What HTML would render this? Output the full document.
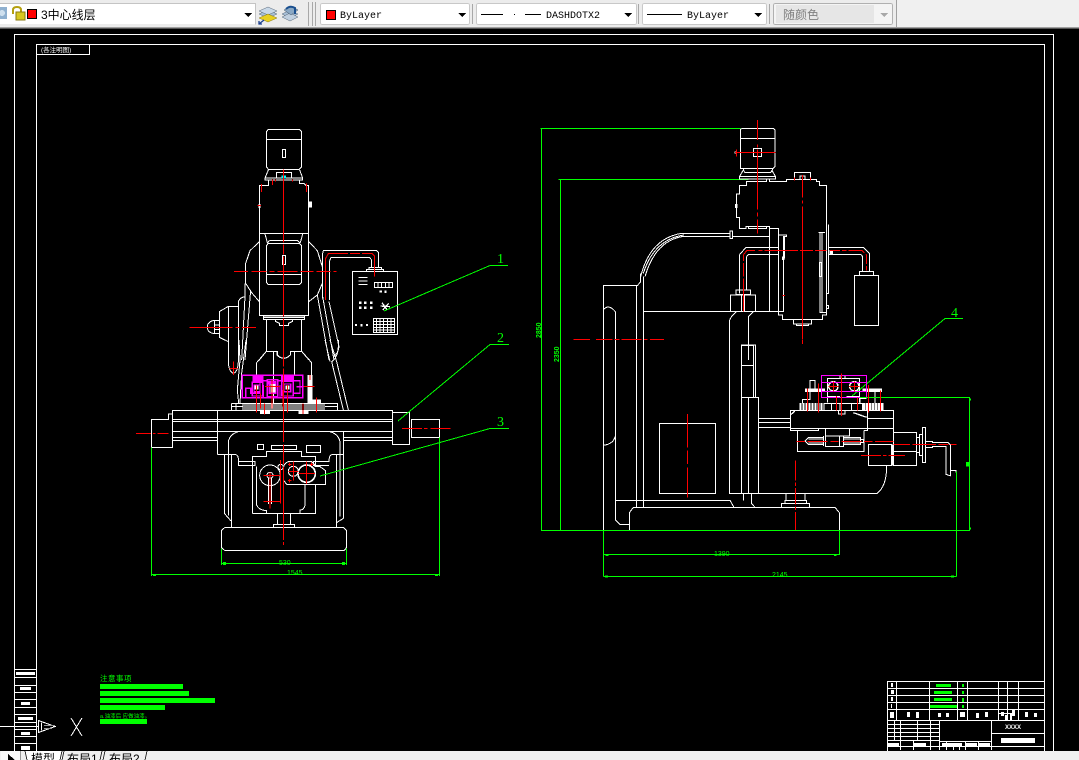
<!DOCTYPE html>
<html><head><meta charset="utf-8"><style>
html,body{margin:0;padding:0;width:1079px;height:760px;overflow:hidden;background:#000}
svg{display:block;position:absolute;left:0;top:0}
.w{fill:none;stroke:#fff;stroke-width:3}
.r{fill:none;stroke:#f00;stroke-width:3}
.g{fill:none;stroke:#0f0;stroke-width:3}
.m{fill:none;stroke:#f0f;stroke-width:3}
.ui{font-family:"Liberation Mono",monospace;font-size:10px;fill:#000}
</style></head><body>
<svg width="1079" height="760" viewBox="0 0 1079 760" xmlns="http://www.w3.org/2000/svg" shape-rendering="crispEdges">
<rect width="1079" height="760" fill="#000"/>

<!-- Frames -->
<g fill="none" stroke="#fff" stroke-width="1">
<path d="M14.5,751V34.5H1053.5V751"/>
<path d="M36.5,751V44.5H1044.5V751"/>
<path d="M36.5,54.5H89.5V44.5"/>
<path d="M14.5,669.5H36.5M14.5,677.5H36.5M14.5,685.5H36.5M14.5,692.5H36.5M14.5,699.5H36.5M14.5,707.5H36.5M14.5,714.5H36.5M14.5,722.5H36.5M14.5,729.5H36.5M14.5,736.5H36.5M14.5,743.5H36.5"/>
<path d="M0,726.5H38"/>
<path d="M38.5,720.5L55,726.5L38.5,732.5ZM41.5,722.5V730.5"/>
<path d="M71,718L82,736M82,718L71,736"/>
</g>
<g fill="#999"><rect x="44" y="725" width="11" height="1"/><rect x="44" y="728" width="8" height="1"/></g>
<g fill="#fff">
<rect x="16" y="672" width="19" height="3"/><rect x="20" y="687" width="11" height="3"/><rect x="21" y="702" width="9" height="3"/><rect x="18" y="717" width="15" height="3"/><rect x="21" y="732" width="9" height="3"/><rect x="21" y="746" width="9" height="4"/>
</g>
<text x="41" y="52" font-family="'Liberation Sans','Noto Sans CJK SC',sans-serif" font-size="6.5" fill="#fff" shape-rendering="auto">(各注明图)</text>

<!-- LEFT VIEW upper -->
<g transform="translate(130,120) scale(.33333)">
<g class="w">
<path d="M415,28H508L515,35V140L508,148H415L409,140V35ZM409,58H515"/>
<rect x="457" y="88" width="10" height="25"/>
<path d="M415,150L405,174M509,150L518,174M405,174H518V180H405ZM439,176V157H485V176"/>
<path d="M415,180V196H388V586H536V196H528L522,190H509V180M388,340H536"/>
<path d="M405,342L412,368M518,342L511,368M418,361H503L510,370M412,370L418,361"/>
<path d="M415,370H508L515,377V487L508,494H415L409,487V377ZM409,463H515"/>
<rect x="457" y="406" width="10" height="28"/>
<path d="M388,365L360,392L347,430V490L365,518L388,545M536,365L562,392L577,440V490L562,525L536,545"/>
<path d="M400,588H524V598H400ZM400,592H524M436,598H488V604L476,610V617H448V610L436,604Z"/>
<path d="M409,598V694M515,598V694M388,720L409,694H443V705Q460,725 481,705V694H515L537,720M430,694V720M493,694V720"/>
<path d="M295,720V559H325M325,720V545Q330,532 345,530V490M345,530L335,720M362,510L345,720"/>
<path d="M295,559L268,575V652L295,665M268,601H253Q232,605 232,621Q232,638 253,641H268M253,601V641M253,615H268M253,628H268"/>
<path d="M562,525L597,720M578,530L612,720M597,545L627,680Q625,700 610,710"/>
<rect x="667" y="454" width="136" height="190"/>
<path d="M710,454V448H760V454M717,448V442H755V448"/>
<path d="M577,535V405L580,392H740L746,398V442M598,540V425L603,412H718L725,420V442"/>
<path d="M685,472H712M685,483H712M685,494H712"/>
<rect x="733" y="487" width="55" height="16"/>
<path d="M744,487V503M755,487V503M766,487V503M777,487V503"/>
<rect x="730" y="595" width="64" height="43"/>
<path d="M730,604H794M730,613H794M730,622H794M730,630H794M740,595V638M750,595V638M761,595V638M772,595V638M783,595V638"/>
<path d="M752,558L780,560M756,548L772,570M776,550L758,570" stroke-width="4"/>
</g>
<g fill="#fff">
<rect x="535" y="244" width="11" height="18"/>
<rect x="385" y="252" width="6" height="12"/>
<rect x="748" y="512" width="8" height="6"/><rect x="763" y="511" width="7" height="8"/>
<rect x="687" y="544" width="8" height="8"/><rect x="702" y="544" width="8" height="8"/><rect x="720" y="544" width="8" height="8"/>
<rect x="687" y="559" width="8" height="8"/><rect x="702" y="559" width="8" height="8"/><rect x="720" y="559" width="8" height="8"/>
<rect x="675" y="612" width="6" height="6"/><rect x="691" y="612" width="6" height="7"/><rect x="708" y="612" width="6" height="6"/>
</g>
<rect x="455" y="167" width="13" height="8" fill="#0ff"/>
<g class="r">
<path d="M460,148V720" stroke-dasharray="220 6 30 6 180 6"/>
<path d="M312,454H620" stroke-dasharray="42 10 45 10 14 10 60 8 40 8"/>
<path d="M178,622H378" stroke-dasharray="130 8 12 8"/>
<path d="M587,540V415L595,401H727L733,408V470" stroke-dasharray="200 6 30 6"/>
<path d="M394,192V216M427,178V195M529,190V216M383,257H393M436,178V184M487,178V184"/>
</g>
</g>

<!-- LEFT VIEW lower -->
<g transform="translate(130,340) scale(.33333)">
<g class="w">
<path d="M380,105V68L409,34H441V45Q460,65 481,45V34H515L545,68V105M430,34V190M409,0V34M515,0V34M493,34V105"/>
<path d="M295,0V60Q295,95 310,100Q325,95 325,60V0M327,0L330,60L322,150L326,190M348,0L335,100L330,190"/>
<path d="M585,0L600,65M600,0L620,65L655,210M625,0Q628,50 605,65L640,210"/>
<path d="M305,190H622V210M305,190V210M305,200H338M585,200H622M318,190V210"/>
<rect x="127" y="211" width="660" height="64" />
<path d="M127,238H787M127,245H787M262,211V344M127,222H115V238H65V322H127V275M127,292H262M127,302H262M640,292H787M640,302H787"/>
<rect x="787" y="217" width="52" height="97"/>
<rect x="845" y="238" width="84" height="54"/>
<path d="M262,344H318Q326,346 326,365H375V376H326V365M640,275V535L620,548M640,344H605Q597,346 597,365H550V376H597"/>
<path d="M295,344V305Q300,282 325,275M630,344V305Q625,282 600,275"/>
<path d="M283,344V520L303,543M295,344V527M304,344V562M619,344V562M630,344V530"/>
<rect x="382" y="313" width="19" height="16"/><rect x="424" y="316" width="76" height="13"/><rect x="529" y="316" width="43" height="22"/>
<path d="M367,520V350H410V334H514V350H557V375M557,433V520H367M380,380V495Q385,510 410,512V520M525,433V495Q522,510 510,510V520"/>
<circle cx="420" cy="406" r="31"/><circle cx="420" cy="406" r="9"/>
<path d="M415,415V492M425,415V492"/>
<path d="M462,380Q462,370 475,365H545L555,375V380H570L587,392V433H470L460,420V380"/>
<circle cx="490" cy="394" r="15"/><circle cx="530" cy="401" r="26" stroke-width="5"/>
<circle cx="452" cy="381" r="8"/>
<path d="M443,520V553M482,520V553M430,553H494V562H430Z"/>
<path d="M285,562H640L650,572V622L642,632H285L274,622V572Z"/>
</g>
<g fill="#fff">
<rect x="533" y="105" width="15" height="85"/>
<rect x="548" y="178" width="25" height="14"/>
<rect x="390" y="210" width="30" height="12"/><rect x="505" y="210" width="30" height="12"/>
</g>
<path d="M338,200H585" stroke="#fff" stroke-width="20" stroke-dasharray="3 3" fill="none"/>
<g class="m" style="stroke-width:4">
<rect x="337" y="106" width="181" height="67"/>
<path d="M347,173V145H362V160H390V122H370V106M367,127H398V168H367ZM412,119H443V170H412ZM455,124H490V168H455ZM490,106V122H510V160H490M398,122H412M443,122H455M400,135V173M450,135V173M518,140H500M372,135H390V155H372ZM418,128H438V160H418ZM462,132H482V155H462Z"/>
<rect x="372" y="107" width="26" height="15" fill="#f0f"/>
<rect x="455" y="107" width="35" height="14" fill="#f0f"/>
<rect x="416" y="125" width="22" height="6" fill="#f0f"/>
</g>
<g fill="#fff"><rect x="374" y="137" width="12" height="12"/><rect x="422" y="132" width="14" height="26"/><rect x="466" y="137" width="12" height="12"/></g>
<g class="r">
<path d="M460,0V615" stroke-dasharray="40 10 30 6 220 8 60 6 220 6"/>
<path d="M18,280H116" stroke-dasharray="45 6 8 6"/>
<path d="M816,265H963" stroke-dasharray="60 6 10 10"/>
<path d="M310,65V105M298,85H322"/>
<path d="M380,137V218M391,160V205M404,190V224M426,120V205M405,139H450M459,150V200M472,135V218M520,139H554M519,190V222M559,172V218M540,105V120"/>
<path d="M400,406H450M420,398V505M400,484H452M451,360V490M505,401H555M530,365V432M475,394H505M490,365V422"/>
<path d="M474,373H484M479,368V378M474,422H484M479,417V427M540,373H550M545,368V378"/>
</g>
</g>

<!-- Left dims/leaders in green -->
<g transform="translate(130,340) scale(.33333)" class="g">
<path d="M274,625V675M650,625V675M274,670H650"/>
<path d="M65,322V708M929,292V708M65,704H929"/>
</g>
<g fill="#0f0">
<rect x="223" y="562" width="3" height="3"/><rect x="342" y="562" width="3" height="3"/>
<rect x="153" y="574" width="3" height="2"/><rect x="435" y="574" width="3" height="2"/>
</g>
<g font-family="'Liberation Sans',sans-serif" font-size="7" fill="#0f0" shape-rendering="auto">
<text x="279" y="565">530</text><text x="287" y="575">1545</text>
</g>

<!-- Leaders -->
<g fill="none" stroke="#0f0" stroke-width="1">
<path d="M384,311L490,265.5H508"/>
<path d="M398,421L490,344.5H509"/>
<path d="M320,476L490,428.5H509"/>
<path d="M852,396L945,318.5H963"/>
</g>
<g font-family="'Liberation Serif',serif" font-size="14" fill="#0f0" shape-rendering="auto">
<text x="497" y="263">1</text><text x="497" y="342">2</text><text x="497" y="426">3</text><text x="951" y="317">4</text>
</g>

<!-- RIGHT VIEW upper -->
<g transform="translate(530,120) scale(.33333)">
<g class="g">
<path d="M32,25H632M35,25V1230M85,178H655M92,178V1230"/>
</g>
<g class="w">
<path d="M632,28L636,25H730L735,30V140L730,145H632ZM632,55H735"/>
<rect x="670" y="85" width="25" height="25"/>
<path d="M640,145H728V150L722,158H645L640,150ZM628,170L640,150M737,170L725,150M628,170H737V177H628Z"/>
<path d="M650,196V184H710V177H718V184H770V178H860V184H868V196H890V585H878V598H757V585H745V325H718V320H648V326H628V292H620V222H628V196ZM655,320V326H710V320"/>
<path d="M793,178V157H842V178M810,178V168H825V178"/>
<path d="M718,320V575M895,313V520H890M870,338V578H890M876,338V578M865,337H885M890,556H896V566H890"/>
<rect x="868" y="428" width="6" height="42"/>
<path d="M790,598V612H845V598M800,612V617H835V612"/>
<rect x="973" y="466" width="73" height="151"/>
<rect x="988" y="454" width="43" height="12"/>
<path d="M896,382H1000L1018,400V454M896,403H990Q998,405 998,415V454"/>
<path d="M628,520V405L648,382H745M650,510V410L655,403H745"/>
<path d="M618,523V510H662V523ZM602,525H677V575H602ZM635,525V575M643,525V575"/>
<path d="M340,574H760V350H770V345H745M760,350V575"/>
<path d="M762,350V415" stroke-width="5"/>
<rect x="600" y="333" width="8" height="23"/>
<path d="M455,340H600M455,350H600M608,349H718"/>
<path d="M455,340Q360,355 332,470M462,345Q372,358 340,460M455,350Q375,365 345,470M340,470V720M332,460V485L322,497H220V720M319,497V720"/>
<path d="M220,570Q235,550 256,575V720"/>
<path d="M598,720V605Q600,590 620,575M655,720V590L670,575"/>
<rect x="634" y="676" width="36" height="60"/>
<path d="M677,676V720"/>
</g>
<g fill="#fff">
<rect x="615" y="252" width="7" height="12"/><rect x="898" y="390" width="11" height="12"/><rect x="613" y="94" width="8" height="7"/><rect x="756" y="410" width="8" height="10"/>
</g>
<g class="r">
<path d="M682,0V340" stroke-dasharray="60 14 8 6 180 10 12 8"/>
<path d="M615,97H737M619,88V110"/>
<path d="M817,165V670" stroke-dasharray="68 8 10 8 400"/>
<path d="M640,575V405L650,392H890" stroke-dasharray="100 6 40 6 60 10 12 6"/>
<path d="M900,391H995L1009,405V454" stroke-dasharray="30 6 14 6 50 6"/>
<path d="M130,658H402" stroke-dasharray="50 18 50 6 14 6 60 8 10 8"/>
<path d="M794,172V182M841,172V182M757,526H765"/>
</g>
</g>

<!-- RIGHT VIEW lower -->
<g transform="translate(590,340) scale(.33333)">
<g class="w">
<path d="M40,0V571M76,0V540L90,553H118M139,0V502M160,0V502M76,481H420M40,316Q70,312 75,290"/>
<path d="M418,0V461H860Q890,440 890,378M454,15H497V172H454ZM490,15V172M475,0V15M454,172H506V461M475,172V461M454,172V461"/>
<rect x="208" y="250" width="169" height="211"/>
<path d="M588,461V481H645V461M585,481H650V490H585ZM574,490H659V502H574ZM420,481L432,502M484,461V490L495,502M460,461V481"/>
<path d="M130,502H735L748,518V571H118V518Z"/>
<path d="M601,211H911V266H601ZM601,266V272H686V266M622,272V335H822V272M706,266V288H779V266M833,211V272H822M833,235H911M911,266V277"/>
<path d="M506,235H601M506,248H601M506,262H601"/>
<rect x="911" y="277" width="69" height="100"/>
<path d="M911,334H980"/>
<rect x="835" y="313" width="70" height="64"/>
<path d="M908,313V377M645,303L655,293H700V313H655ZM700,288V318M706,288H760V320H706ZM748,288V320M760,293H812V313H760ZM812,298H820V308H812"/>
<path d="M655,297H700M655,309H700M760,297H812M760,309H812"/>
<path d="M988,283H997V347H988ZM997,262H1007V368H997ZM980,293H988M980,337H988M1007,304H1028V308H1075L1082,316V408M1007,322H1028V320H1068V403L1082,408M1082,392H1098V398"/>
<path d="M700,190H818V211M725,190V211M750,190V211M785,190V211M803,190V211"/>
<path d="M712,170V115H808V170M712,188V170H750M770,170H808V188"/>
<circle cx="730" cy="139" r="14" stroke-width="4"/><circle cx="793" cy="139" r="14" stroke-width="4"/>
<path d="M660,145V122H675V145M638,190V178H660V155M855,190V155M810,190V175H830"/>
<path d="M601,225L615,213M790,218L830,232" stroke-width="4"/>
<path d="M750,115V106H765V115M745,211V222H765V211"/>
</g>
<g fill="#fff"><rect x="645" y="145" width="60" height="11"/><rect x="818" y="145" width="58" height="11"/></g>
<path d="M628,200H704M818,200H882" stroke="#fff" stroke-width="21" stroke-dasharray="7 2" fill="none"/>
<g class="m">
<rect x="694" y="106" width="136" height="67"/>
<path d="M694,127H830M694,154H830"/>
</g>
<g class="g">
<path d="M-147,571H1140M40,571V710M748,571V645M40,644H748M40,710H1100M1100,395V710M810,172H1138V571"/>
</g>
<rect x="1128" y="366" width="10" height="14" fill="#0f0"/>
<g fill="#0f0">
<rect x="47" y="644" width="8" height="4"/><rect x="732" y="644" width="8" height="4"/><rect x="45" y="706" width="9" height="6"/><rect x="1083" y="706" width="9" height="6"/><rect x="1138" y="176" width="5" height="6"/><rect x="1138" y="562" width="5" height="6"/>
</g>
<g class="r">
<path d="M292,222V476" stroke-dasharray="100 10 40 10 90"/>
<path d="M616,362V570" stroke-dasharray="60 6 10 6 50 6 10 6 80"/>
<path d="M637,0V12M620,304H910" stroke-dasharray="25 8 60 8"/>
<path d="M910,313H1100" stroke-dasharray="50 8 70 8 30 6"/>
<path d="M813,346H945" stroke-dasharray="60 6 10 6"/>
<path d="M652,145V215M685,130V218M739,168V212M802,172V212M835,135V218M871,152V215M754,100V228"/>
<path d="M715,139H745M777,139H808M730,125V155M793,125V155"/>
</g>
</g>
<g font-family="'Liberation Sans',sans-serif" font-size="7" fill="#0f0" shape-rendering="auto">
<text x="714" y="556">1390</text><text x="772" y="577">2145</text>
<text transform="translate(541,338) rotate(-90)" font-weight="bold">2850</text>
<text transform="translate(559,362) rotate(-90)" font-weight="bold">2350</text>
</g>

<!-- Notes -->
<text x="100" y="681" font-family="'Liberation Sans','Noto Sans CJK SC',sans-serif" font-size="7.5" fill="#0f0" shape-rendering="auto" letter-spacing="0.5">注意事项</text>
<g fill="#0f0">
<rect x="100" y="684" width="83" height="5"/><rect x="100" y="691" width="89" height="5"/><rect x="100" y="698" width="115" height="5"/><rect x="100" y="705" width="65" height="5"/><rect x="100" y="719" width="47" height="5"/>
</g>
<text x="100" y="718" font-family="'Liberation Sans','Noto Sans CJK SC',sans-serif" font-size="5.5" fill="#0f0" shape-rendering="auto">a.油漆后 应做油漆。</text>

<!-- Title block -->
<g fill="none" stroke="#fff" stroke-width="1">
<path d="M887.5,751V681.5H1044.5M887.5,688.5H1044.5M887.5,695.5H1044.5M887.5,702.5H1044.5M887.5,709.5H1044.5M887.5,720.5H1044.5"/>
<path d="M896.5,681.5V720.5M929.5,681.5V720.5M957.5,681.5V720.5M967.5,681.5V720.5M998.5,681.5V720.5M1007.5,681.5V720.5M1018.5,681.5V720.5"/>
<path d="M939.5,720.5V750M991.5,720.5V750M991.5,733.5H1044.5M991.5,746.5H1044.5"/>
<path d="M887.5,724.5H939.5M887.5,728.5H939.5M887.5,732.5H939.5M887.5,736.5H939.5M887.5,740.5H939.5M887.5,746.5H991.5"/>
<path d="M894.5,720.5V740M900.5,720.5V750M917.5,720.5V740M930.5,720.5V750M913.5,741V750M946.5,741V750M953.5,746V750M959.5,746V750M965.5,741V750M978.5,741V750"/>
<path d="M939.5,741.5H991.5M999,713.5H1014"/>
</g>
<g fill="#0f0">
<rect x="936" y="684" width="15" height="3"/><rect x="934" y="691" width="18" height="3"/><rect x="934" y="698" width="18" height="3"/><rect x="930" y="705" width="27" height="3"/>
<rect x="962" y="684" width="2" height="3"/><rect x="962" y="691" width="2" height="3"/><rect x="962" y="698" width="2" height="4"/><rect x="962" y="705" width="2" height="3"/>
</g>
<g fill="#fff">
<rect x="891" y="683" width="2" height="4"/><rect x="891" y="690" width="3" height="4"/><rect x="891" y="697" width="2" height="4"/><rect x="891" y="704" width="1" height="4"/>
<rect x="890" y="712" width="4" height="6"/><rect x="907" y="712" width="3" height="5"/><rect x="916" y="712" width="3" height="6"/><rect x="938" y="713" width="3" height="4"/><rect x="946" y="713" width="3" height="4"/><rect x="960" y="712" width="5" height="5"/><rect x="976" y="713" width="3" height="5"/><rect x="985" y="712" width="3" height="5"/><rect x="1001" y="712" width="3" height="4"/><rect x="1012" y="710" width="3" height="6"/><rect x="1005" y="715" width="2" height="5"/><rect x="1010" y="714" width="2" height="6"/><rect x="1025" y="712" width="3" height="5"/><rect x="1034" y="713" width="3" height="4"/>
<rect x="888" y="743" width="11" height="4"/><rect x="914" y="743" width="12" height="4"/><rect x="942" y="743" width="20" height="4"/><rect x="966" y="743" width="11" height="4"/><rect x="979" y="743" width="11" height="4"/>
<rect x="1001" y="738" width="34" height="5"/>
</g>
<text x="1005" y="729" font-family="'Liberation Sans',sans-serif" font-size="6" font-weight="bold" fill="#fff" shape-rendering="auto">XXXX</text>

<!-- Toolbar -->
<rect x="0" y="0" width="1079" height="27" fill="#ececec"/>
<rect x="0" y="27" width="896" height="1" fill="#a0a0a0"/>
<rect x="896" y="27" width="183" height="1" fill="#a0a0a0"/>
<rect x="0" y="28" width="1079" height="1" fill="#555"/>
<rect x="896" y="0" width="183" height="27" fill="#f0f0f0"/>
<rect x="896" y="0" width="1" height="27" fill="#a0a0a0"/>

<!-- Layer combo -->
<rect x="0" y="3" width="255" height="21" fill="#fff"/>
<path d="M0,3.5H255.5V24.5" fill="none" stroke="#c4c4c4"/>
<rect x="0" y="7" width="7" height="12" fill="#8fb0cf"/>
<circle cx="2" cy="13" r="3" fill="#cfe0ee"/>
<path d="M13,14V10Q13,7 17,7Q21,7 21,10V12" fill="none" stroke="#b5a010" stroke-width="2" shape-rendering="auto"/>
<rect x="16" y="12" width="9" height="8" fill="#d8c820" stroke="#8a7a10" stroke-width="1"/>
<rect x="27.5" y="9.5" width="9" height="9" fill="#f00" stroke="#000"/>
<text x="41" y="19" font-family="'Liberation Sans','WenQuanYi Zen Hei','Noto Sans CJK SC',sans-serif" font-size="12" fill="#000" shape-rendering="auto">3中心线层</text>
<path d="M244,13H252L248,17Z" fill="#000"/>

<!-- Layer icons -->
<g shape-rendering="auto">
<path d="M259,14L268,10L277,14L268,18Z" fill="#a8c0d8" stroke="#567"  stroke-width=".5"/>
<path d="M259,11L268,7L277,11L268,15Z" fill="#c8d8e8" stroke="#567" stroke-width=".5"/>
<path d="M259,18L268,14L277,18L268,22Z" fill="#e8d020" stroke="#8a7a10" stroke-width=".5"/>
<path d="M259,24L264,20M259,21V24H262" fill="none" stroke="#1a3f8f" stroke-width="1.3"/>
<path d="M282,14L290,10L298,14L290,18Z" fill="#a8c0d8" stroke="#567" stroke-width=".5"/>
<path d="M282,17L290,13L298,17L290,21Z" fill="#c0d0e0" stroke="#567" stroke-width=".5"/>
<path d="M284,10L291,6L298,10L291,15Z" fill="#8aa8c4" stroke="#456" stroke-width=".5"/>
<path d="M286,9Q290,5 295,8V14" fill="none" stroke="#1a4f8f" stroke-width="2"/>
</g>

<!-- Grips -->
<rect x="308" y="2" width="1" height="24" fill="#a8a8a8"/><rect x="312" y="2" width="1" height="24" fill="#a8a8a8"/><rect x="315" y="2" width="1" height="24" fill="#a8a8a8"/>

<!-- Color combo -->
<rect x="320.5" y="3.5" width="149" height="21" rx="2" fill="#fff" stroke="#c8c8c8"/>
<rect x="326.5" y="10.5" width="9" height="9" fill="#f00" stroke="#000"/>
<text x="340" y="18" class="ui" shape-rendering="auto">ByLayer</text>
<path d="M458,13H466L462,17Z" fill="#000"/>
<rect x="472" y="4" width="1" height="20" fill="#a8a8a8"/>

<!-- Linetype combo -->
<rect x="476.5" y="3.5" width="160" height="21" rx="2" fill="#fff" stroke="#c8c8c8"/>
<path d="M481,14.5H503M514,14.5H515M525,14.5H541" stroke="#000" fill="none"/>
<text x="546" y="18" class="ui" shape-rendering="auto">DASHDOTX2</text>
<path d="M624,13H632L628,17Z" fill="#000"/>
<rect x="638" y="4" width="1" height="20" fill="#a8a8a8"/>

<!-- Lineweight combo -->
<rect x="642.5" y="3.5" width="124" height="21" rx="2" fill="#fff" stroke="#c8c8c8"/>
<path d="M647,14.5H682" stroke="#000" fill="none"/>
<text x="687" y="18" class="ui" shape-rendering="auto">ByLayer</text>
<path d="M754,13H762L758,17Z" fill="#000"/>
<rect x="769" y="4" width="1" height="20" fill="#a8a8a8"/>

<!-- Plot style combo -->
<rect x="773.5" y="3.5" width="119" height="21" rx="2" fill="#f4f4f4" stroke="#b0b0b0"/>
<rect x="776" y="5" width="98" height="18" fill="#e6e6e6"/>
<text x="783" y="19" font-family="'Liberation Sans','WenQuanYi Zen Hei','Noto Sans CJK SC',sans-serif" font-size="12" fill="#808080" shape-rendering="auto">随颜色</text>
<path d="M880,13H888L884,17Z" fill="#a8a8a8"/>

<!-- Tabs -->
<rect x="0" y="751" width="1079" height="9" fill="#f0f0f0"/>
<rect x="1" y="751" width="19" height="9" fill="#f8f8f8"/>
<path d="M8,754L15,760H8Z" fill="#000"/>
<path d="M20.5,751V760" stroke="#999"/>
<rect x="26" y="751" width="36" height="9" fill="#fff"/>
<path d="M25,751L27,760M62,751L60,760M64,751L62,760M102,751L100,760M105,751L103,760M147,751L145,760" stroke="#333" fill="none"/>
<g font-family="'Liberation Sans','WenQuanYi Zen Hei','Noto Sans CJK SC',sans-serif" font-size="12" fill="#000" shape-rendering="auto">
<text x="31" y="763">模型</text>
<text x="67" y="763">布局1</text>
<text x="109" y="763">布局2</text>
</g>
</svg>
</body></html>
